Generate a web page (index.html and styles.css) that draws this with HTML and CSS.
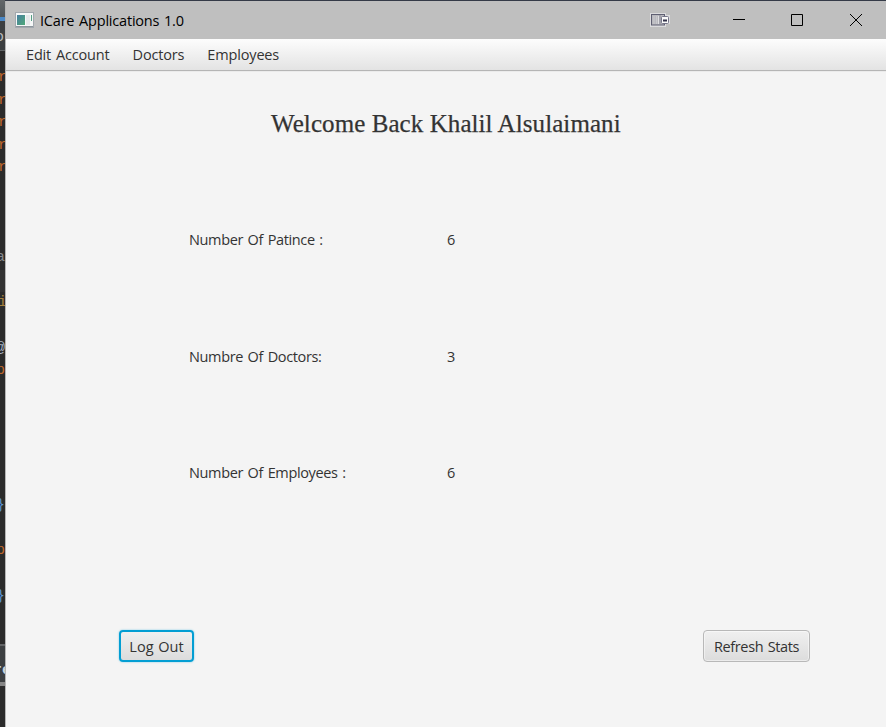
FILE: index.html
```
<!DOCTYPE html>
<html lang="en">
<head>
<meta charset="utf-8">
<title>ICare Applications 1.0</title>
<link rel="stylesheet" href="styles.css">
</head>
<body>
<div class="desktop">
  <div class="editor" aria-hidden="true">
    <div class="ed-toolbar"></div>
    <div class="ed-accent"></div>
    <div class="ed-tab"><span>o</span></div>
    <div class="ed-code">
      <span class="kw">r</span><span class="kw">r</span><span class="kw">r</span><span class="kw">r</span><span class="kw">r</span>
      <span></span><span></span><span></span>
      <span class="dim">a</span><span class="current"></span><span class="kw olive">i</span><span></span>
      <span class="at">@</span><span class="kw p">p</span><span></span><span></span><span></span><span></span><span></span>
      <span class="brace">}</span><span></span><span class="kw p">p</span><span></span><span class="brace">}</span>
    </div>
    <div class="ed-panel"><span>re</span></div>
  </div>
  <main class="window">
    <header class="titlebar">
      <svg class="app-icon" width="19" height="16" viewBox="0 0 19 16">
        <defs><linearGradient id="g" x1="0" y1="0" x2="1" y2="1"><stop offset="0" stop-color="#477fa0"/><stop offset="1" stop-color="#4fa878"/></linearGradient></defs>
        <rect x=".5" y=".5" width="18" height="15" fill="#f5f7f7" stroke="#a2a8ae"/>
        <path d="M1 14.5h17" stroke="#8e969d"/>
        <rect x="2" y="3" width="8" height="10" fill="url(#g)"/>
        <path d="M11 3h4v10h-4z" fill="#e5e8ea"/>
        <path d="M16 3h1v6h-1z" fill="#559f83"/>
      </svg>
      <h1>ICare Applications 1.0</h1>
      <svg class="device" width="20" height="14" viewBox="0 0 20 14">
        <path d="M0 0h16v2h4v9h-4v3H0z" fill="#dcdcde"/>
        <rect x="1.5" y="1.5" width="13" height="10.5" fill="#b9b9be" stroke="#5f5f72"/>
        <path d="M4 3v8M6.500 3v8" stroke="#c8c8cd"/>
        <path d="M8.500 3v8" stroke="#dedee1"/>
        <path d="M10 2v9" stroke="#8b8b98"/>
        <rect x="11.500" y="3.500" width="7" height="7" rx="1" fill="#fafafa" stroke="#77778a"/>
        <path d="M13 7.500h4" stroke="#303048" stroke-width="2"/>
      </svg>
      <div class="controls">
        <svg width="12" height="12" viewBox="0 0 12 12"><path d="M0 5.5h12"/></svg>
        <svg width="12" height="12" viewBox="0 0 12 12"><path d="M.5 .5h11v11H.5z"/></svg>
        <svg width="12" height="12" viewBox="0 0 12 12"><path d="M0 0l12 12M12 0L0 12"/></svg>
      </div>
    </header>
    <nav class="menubar"><span>Edit Account</span><span>Doctors</span><span>Employees</span></nav>
    <section class="content">
      <h2>Welcome Back Khalil Alsulaimani</h2>
      <dl class="stats">
        <dt>Number Of Patince :</dt><dd>6</dd>
        <dt>Numbre Of Doctors:</dt><dd>3</dd>
        <dt>Number Of Employees :</dt><dd>6</dd>
      </dl>
      <div class="actions">
        <button class="focused">Log Out</button>
        <button class="refresh">Refresh Stats</button>
      </div>
    </section>
  </main>
</div>
</body>
</html>
```
FILE: styles.css
```
* { box-sizing: border-box; }
body { margin: 0; font: 14.5px/20px "Open Sans", sans-serif; letter-spacing: -0.36px; word-spacing: 1.2px; color: #333; }
.desktop { display: flex; width: 886px; height: 727px; overflow: hidden; background: #343a47; }

.editor { display: flex; flex-direction: column; width: 5px; flex: none; overflow: hidden; background: #2b2b2b; font: 15px/22.55px "Liberation Mono", monospace; letter-spacing: 0; }
.ed-toolbar { height: 17px; flex: none; background: linear-gradient(#63676a, #505558); }
.ed-accent { height: 4px; flex: none; background: #4a88c7; }
.ed-tab { height: 30px; flex: none; background: #3c3f41; border-bottom: 1px solid #606365; color: #b5b8ba; line-height: 33px; }
.ed-tab span { margin-left: -5px; }
.ed-code { display: flex; flex-direction: column; padding-top: 16px; height: 593px; flex: none; }
.ed-code span { display: block; width: 9px; height: 22.55px; flex: none; margin-left: -2px; }
.ed-code .kw { color: #c0682c; }
.ed-code .p { margin-left: -4px; }
.ed-code .olive { color: #a5803c; }
.ed-code .dim { color: #85888b; margin-left: -4px; }
.ed-code .current { background: #323232; }
.ed-code .at { color: #a9b7c6; margin-left: -4px; }
.ed-code .brace { color: #5c92d0; margin-left: -4px; }
.ed-panel { height: 42px; flex: none; background: #3c3f41; border-top: 2px solid #626466; border-bottom: 4px solid #858585; color: #c9d3dd; font-weight: bold; line-height: 49px; }
.ed-panel span { margin-left: -7px; }

.window { display: flex; flex-direction: column; flex: 1; margin-top: 1px; border-left: 1px solid #b5b5b5; background: #f4f4f4; }
.titlebar { display: flex; align-items: center; height: 38px; flex: none; padding: 0 24px 0 9px; background: #bfbfbf; color: #000; }
.titlebar h1 { margin: 0 0 0 6px; padding-top: 1px; width: 610px; font-size: 14.5px; font-weight: 400; letter-spacing: -0.2px; }
.titlebar .device { flex: none; }
.app-icon { flex: none; }
.controls { display: flex; gap: 47px; margin-left: auto; fill: none; stroke: #000; stroke-width: 1; }
.controls svg { display: block; }
.controls svg:first-child { margin-right: -1px; }

.menubar { display: flex; align-items: center; gap: 23px; height: 32px; flex: none; padding-left: 20px; background: linear-gradient(#fdfdfd, #e3e3e3); border-bottom: 1px solid #b5b5b5; letter-spacing: -0.16px; }
.menubar span { white-space: nowrap; }

.content { display: flex; flex-direction: column; flex: 1; border-top: 1px solid #ebebeb; }
h2 { margin: 35px 0 0 265px; font: 400 25px/34px "Liberation Serif", serif; letter-spacing: 0.08px; word-spacing: 0; white-space: nowrap; color: #333; -webkit-text-stroke: 0.25px #333; }
.stats { display: grid; grid-template-columns: 258px 1fr; grid-auto-rows: 116.5px; margin: 88px 0 0 183px; }
.stats dt, .stats dd { margin: 0; white-space: nowrap; line-height: 22px; }
.actions { display: flex; justify-content: space-between; padding: 0 76px 0 113px; margin-top: 51px; }
button { height: 32px; padding: 2px 0 0; border: 1px solid #b8b8b8; border-radius: 4px; background: linear-gradient(#f0f0f0, #dcdcdc); box-shadow: inset 0 0 0 1px rgba(255,255,255,.45); color: #333; font: 14.5px/20px "Open Sans", sans-serif; letter-spacing: -0.36px; word-spacing: 1px; white-space: nowrap; }
.refresh { width: 107px; }
.focused { width: 75px; letter-spacing: 0; border: 2px solid #039ed3; box-shadow: 0 0 2px #72c6e3; }
```
